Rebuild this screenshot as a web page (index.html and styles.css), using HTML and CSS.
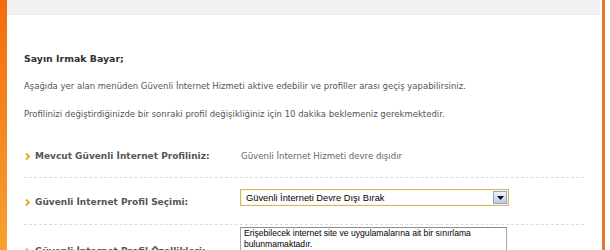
FILE: index.html
```html
<!DOCTYPE html>
<html lang="tr">
<head>
<meta charset="utf-8">
<link rel="stylesheet" href="styles.css">
</head>
<body>
<div class="frame">
  <div class="bar-left"></div>
  <div class="main">
    <div class="topband"></div>
    <div class="content">
      <p class="greet">Sayın Irmak Bayar;</p>
      <p class="para p1">Aşağıda yer alan menüden Güvenli İnternet Hizmeti aktive edebilir ve profiller arası geçiş yapabilirsiniz.</p>
      <p class="para p2">Profilinizi değiştirdiğinizde bir sonraki profil değişikliğiniz için 10 dakika beklemeniz gerekmektedir.</p>

      <div class="row row1">
        <div class="label"><svg class="arrow" width="5" height="7" viewBox="0 0 5 7"><path d="M1 0.5 L4 3.5 L1 6.5" fill="none" stroke="#f2a20c" stroke-width="1.8"/></svg>Mevcut Güvenli İnternet Profiliniz:</div>
        <div class="value">Güvenli İnternet Hizmeti devre dışıdır</div>
      </div>

      <div class="row row2">
        <div class="label"><svg class="arrow" width="5" height="7" viewBox="0 0 5 7"><path d="M1 0.5 L4 3.5 L1 6.5" fill="none" stroke="#f2a20c" stroke-width="1.8"/></svg>Güvenli İnternet Profil Seçimi:</div>
        <div class="select">
          <span class="select-text">Güvenli İnterneti Devre Dışı Bırak</span>
          <span class="select-btn"><svg width="7" height="4" viewBox="0 0 7 4"><path d="M0 0 H7 L3.5 4 Z" fill="#111"/></svg></span>
        </div>
      </div>

      <div class="row row3">
        <div class="label"><svg class="arrow" width="5" height="7" viewBox="0 0 5 7"><path d="M1 0.5 L4 3.5 L1 6.5" fill="none" stroke="#f2a20c" stroke-width="1.8"/></svg>Güvenli İnternet Profil Özellikleri:</div>
        <div class="textbox">Erişebilecek internet site ve uygulamalarına ait bir sınırlama bulunmamaktadır.</div>
      </div>
    </div>
  </div>
  <div class="bar-right"></div>
</div>
</body>
</html>
```

FILE: styles.css
```css
html, body {
  margin: 0;
  padding: 0;
  background: #ffffff;
}

.frame {
  display: flex;
  width: 610px;
  height: 250px;
  overflow: hidden;
}

.bar-left {
  width: 7px;
  flex: none;
  background: linear-gradient(to bottom, #f26c12, #f7a12e);
}

.main {
  flex: 1;
  min-width: 0;
}

.bar-right {
  width: 3px;
  flex: none;
  margin-right: 5px;
  background: #e2792c;
}

.topband {
  height: 14px;
  margin-right: 2px;
  background: #f1f1f1;
  border-bottom: 1px solid #e7e7e7;
}

.content {
  padding-left: 17px;
  padding-right: 12px;
}

p {
  margin: 0;
}

.greet {
  margin-top: 37px;
  font-family: "DejaVu Sans", sans-serif;
  font-weight: bold;
  font-size: 9.4px;
  line-height: 14px;
  color: #333333;
}

.para {
  font-family: "DejaVu Sans", sans-serif;
  font-size: 8.5px;
  line-height: 14px;
  color: #555555;
}

.p1 {
  margin-top: 13px;
}

.p2 {
  margin-top: 14px;
}

.row {
  display: grid;
  grid-template-columns: 216px 1fr;
  border-bottom: 1px dashed #dddddd;
  margin-right: 6px;
}

.label {
  display: flex;
  align-items: center;
  gap: 5px;
  padding-left: 1px;
  font-family: "DejaVu Sans", sans-serif;
  font-weight: bold;
  font-size: 9px;
  line-height: 14px;
  color: #555555;
}

.arrow {
  flex: none;
}

.row1 {
  margin-top: 14px;
  height: 42px;
  align-items: center;
}

.value {
  font-family: "DejaVu Sans", sans-serif;
  font-size: 8.6px;
  line-height: 14px;
  color: #666666;
  padding-left: 1px;
}

.row2 {
  height: 46px;
  align-items: start;
}

.row2 .label {
  margin-top: 17px;
}

.select {
  margin-top: 11px;
  width: 269px;
  height: 17px;
  box-sizing: border-box;
  border: 1px solid #d9b36a;
  box-shadow: inset 0 0 2px #f3dca0;
  background: #ffffff;
  display: flex;
  align-items: center;
  justify-content: space-between;
  padding-left: 5px;
  padding-right: 1px;
}

.select-text {
  font-family: "Liberation Sans", Arial, sans-serif;
  font-size: 9.3px;
  color: #000000;
}

.select-btn {
  width: 14px;
  height: 13px;
  box-sizing: border-box;
  border: 1px solid #8fa6c6;
  background: linear-gradient(to bottom, #eef3fa, #bccbe2);
  display: flex;
  align-items: center;
  justify-content: center;
}

.row3 {
  border-bottom: none;
  align-items: start;
}

.row3 .label {
  margin-top: 19px;
}

.textbox {
  margin-top: 2px;
  width: 267px;
  height: 40px;
  box-sizing: border-box;
  border: 1px solid #a8a8a8;
  border-top-color: #8c8c8c;
  padding: 0 3px;
  font-family: "Liberation Sans", Arial, sans-serif;
  font-size: 8.6px;
  line-height: 11px;
  color: #000000;
}
```
